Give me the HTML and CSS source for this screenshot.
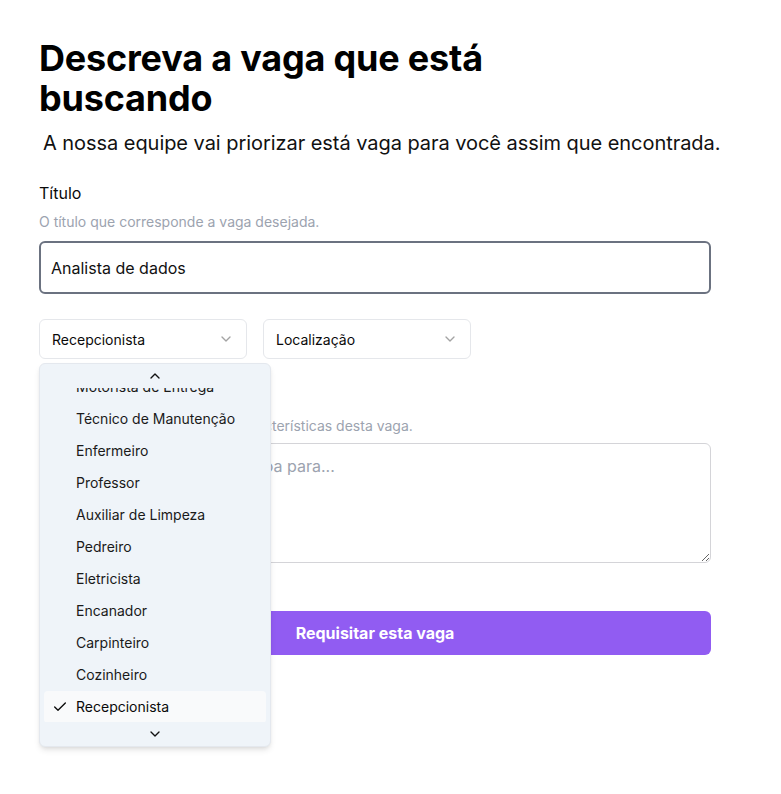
FILE: index.html
```html
<!DOCTYPE html>
<html lang="pt-BR">
<head>
    <meta charset="UTF-8">
    <title>Descreva a vaga</title>
    <meta name="viewport" content="width=device-width,initial-scale=1">
    <link rel="stylesheet" href="styles.css">
</head>
<body>
    <div class="wrap">
        <h1 class="title">Descreva a vaga que está buscando</h1>
        <p class="lead">A nossa equipe vai priorizar está vaga para você assim que encontrada.</p>

        <form class="form">
            <div class="field">
                <label class="field-label" for="titulo">Título</label>
                <p class="field-desc">O título que corresponde a vaga desejada.</p>
                <input type="text" id="titulo" class="text-input" value="Analista de dados">
            </div>

            <div class="select-row">
                <div class="select-box">
                    <button type="button" class="select-trigger">
                        <span>Recepcionista</span>
                        <svg class="chev" width="16" height="16" viewBox="0 0 24 24" fill="none" stroke="currentColor" stroke-width="2" stroke-linecap="round" stroke-linejoin="round"><path d="m6 9 6 6 6-6"/></svg>
                    </button>

                    <!-- lista aberta -->
                    <div class="select-menu">
                        <div class="scroll-btn">
                            <svg width="16" height="16" viewBox="0 0 24 24" fill="none" stroke="currentColor" stroke-width="2" stroke-linecap="round" stroke-linejoin="round"><path d="m18 15-6-6-6 6"/></svg>
                        </div>
                        <div class="viewport">
                            <ul class="options">
                                <li class="option">Motorista de Entrega</li>
                                <li class="option">Técnico de Manutenção</li>
                                <li class="option">Enfermeiro</li>
                                <li class="option">Professor</li>
                                <li class="option">Auxiliar de Limpeza</li>
                                <li class="option">Pedreiro</li>
                                <li class="option">Eletricista</li>
                                <li class="option">Encanador</li>
                                <li class="option">Carpinteiro</li>
                                <li class="option">Cozinheiro</li>
                                <li class="option is-active">
                                    <svg class="check" width="16" height="16" viewBox="0 0 24 24" fill="none" stroke="currentColor" stroke-width="2" stroke-linecap="round" stroke-linejoin="round"><path d="M20 6 9 17l-5-5"/></svg>
                                    Recepcionista
                                </li>
                            </ul>
                        </div>
                        <div class="scroll-btn">
                            <svg width="16" height="16" viewBox="0 0 24 24" fill="none" stroke="currentColor" stroke-width="2" stroke-linecap="round" stroke-linejoin="round"><path d="m6 9 6 6 6-6"/></svg>
                        </div>
                    </div>
                    <!-- //lista aberta -->
                </div>

                <div class="select-box">
                    <button type="button" class="select-trigger">
                        <span>Localização</span>
                        <svg class="chev" width="16" height="16" viewBox="0 0 24 24" fill="none" stroke="currentColor" stroke-width="2" stroke-linecap="round" stroke-linejoin="round"><path d="m6 9 6 6 6-6"/></svg>
                    </button>
                </div>
            </div>

            <div class="field field-desc-box">
                <label class="field-label" for="descricao">Descrição</label>
                <p class="field-desc">Descreva detalhadamente as características desta vaga.</p>
                <textarea id="descricao" class="text-area" placeholder="Estou procurando uma pessoa para..."></textarea>
            </div>

            <button type="button" class="submit-btn">Requisitar esta vaga</button>
        </form>
    </div>
</body>
</html>
```

FILE: styles.css
```css
html, body {margin:0;color:#0a0a0a;}
body {font-family:Inter, "Noto Sans", sans-serif;font-size:16px;background:#fff;min-height:794px;}
h1, p, ul {margin:0;padding:0;}
ul {list-style:none;}

.wrap {width:672px;padding:38px 0 0 39px;}

.title {font-size:36px;line-height:40px;font-weight:700;letter-spacing:-.2px;max-width:480px;color:#000;}
.lead {font-size:20px;line-height:28px;letter-spacing:-.05px;padding-left:4px;margin-top:11px;color:#111;white-space:nowrap;}

.form {margin-top:24px;}
.field-label {display:block;font-size:16px;line-height:24px;}
.field-desc {font-size:14px;line-height:20px;color:#9ca3af;margin-top:7px;}

.text-input {display:block;box-sizing:border-box;width:100%;height:53px;margin-top:9px;padding:0 10px;border:2px solid #6b7280;border-radius:6px;font:inherit;font-size:16px;color:#111;}
.text-area {display:block;box-sizing:border-box;width:100%;height:120px;margin-top:7px;padding:10px 12px;border:1px solid #d4d4d8;border-radius:6px;font:inherit;font-size:16px;line-height:24px;resize:vertical;}
.text-area::placeholder {color:#9ca3af;}

.select-row {display:flex;gap:16px;margin-top:25px;}
.select-box {position:relative;}
.select-trigger {display:flex;align-items:center;justify-content:space-between;box-sizing:border-box;width:208px;height:40px;padding:0 12px;border:1px solid #e5e7eb;border-radius:6px;background:#fff;font:inherit;font-size:14px;color:#0a0a0a;}
.select-trigger .chev {color:#a3a3a3;}

.field-desc-box {margin-top:26px;}

.select-menu {position:absolute;top:44px;left:0;z-index:10;box-sizing:border-box;width:232px;height:384px;border:1px solid #e4e8ee;border-radius:6px;background:#eff4f9;box-shadow:0 4px 6px -1px rgba(0,0,0,.1),0 2px 4px -2px rgba(0,0,0,.1);display:flex;flex-direction:column;}
.scroll-btn {display:flex;justify-content:center;align-items:center;height:24px;flex:none;color:#111;}
.viewport {height:334px;overflow:hidden;padding:0 4px;}
.options {margin-top:-17px;}
.option {position:relative;height:32px;line-height:32px;padding-left:32px;font-size:14px;color:#1a1a1a;border-radius:4px;}
.option .check {position:absolute;left:8px;top:8px;}
.option.is-active {background:#f9fafb;color:#0a0a0a;}

.submit-btn {display:block;width:100%;height:44px;margin-top:48px;border:0;border-radius:6px;background:#915cf2;color:#fff;font:inherit;font-size:16px;font-weight:700;}
```
